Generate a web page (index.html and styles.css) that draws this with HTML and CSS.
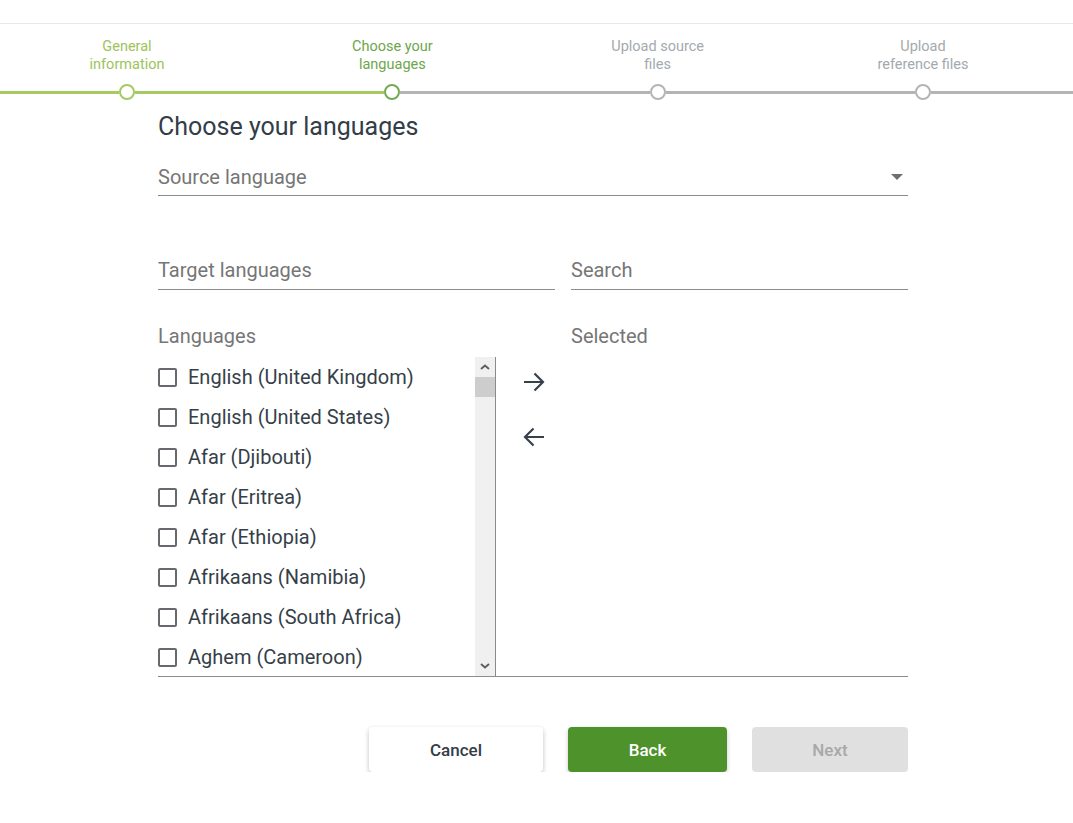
FILE: index.html
```html
<!DOCTYPE html>
<html>
<head>
<meta charset="utf-8">
<link rel="stylesheet" href="styles.css">
</head>
<body>
<div class="topbar"></div>
<div class="stepper-wrap">
  <div class="stepper">
    <div class="step done">
      <div class="step-label">General<br>information</div>
      <div class="node-row"><span class="ln ln-l"></span><span class="node"></span><span class="ln ln-r"></span></div>
    </div>
    <div class="step current">
      <div class="step-label">Choose your<br>languages</div>
      <div class="node-row"><span class="ln ln-l"></span><span class="node"></span><span class="ln ln-r"></span></div>
    </div>
    <div class="step todo">
      <div class="step-label">Upload source<br>files</div>
      <div class="node-row"><span class="ln ln-l"></span><span class="node"></span><span class="ln ln-r"></span></div>
    </div>
    <div class="step todo last">
      <div class="step-label">Upload<br>reference files</div>
      <div class="node-row"><span class="ln ln-l"></span><span class="node"></span><span class="ln ln-r"></span></div>
    </div>
  </div>
</div>

<main class="content">
  <h1 class="title">Choose your languages</h1>

  <div class="field select-field">
    <span class="placeholder">Source language</span>
    <span class="caret"></span>
  </div>

  <div class="two-col">
    <div class="field target-field"><span class="placeholder">Target languages</span></div>
    <div class="field search-field"><span class="placeholder">Search</span></div>
  </div>

  <div class="col-heads">
    <div class="col-head lang-head">Languages</div>
    <div class="col-head sel-head">Selected</div>
  </div>

  <div class="lists">
    <div class="lang-panel">
      <ul class="lang-list">
        <li class="item"><span class="cb"></span>English (United Kingdom)</li>
        <li class="item"><span class="cb"></span>English (United States)</li>
        <li class="item"><span class="cb"></span>Afar (Djibouti)</li>
        <li class="item"><span class="cb"></span>Afar (Eritrea)</li>
        <li class="item"><span class="cb"></span>Afar (Ethiopia)</li>
        <li class="item"><span class="cb"></span>Afrikaans (Namibia)</li>
        <li class="item"><span class="cb"></span>Afrikaans (South Africa)</li>
        <li class="item"><span class="cb"></span>Aghem (Cameroon)</li>
      </ul>
      <div class="scrollbar">
        <div class="sb-btn sb-up"><svg width="10" height="6" viewBox="0 0 10 6"><path d="M1 5 L5 1.5 L9 5" fill="none" stroke="#606060" stroke-width="2"/></svg></div>
        <div class="sb-track"><div class="sb-thumb"></div></div>
        <div class="sb-btn sb-down"><svg width="10" height="6" viewBox="0 0 10 6"><path d="M1 1 L5 4.5 L9 1" fill="none" stroke="#606060" stroke-width="2"/></svg></div>
      </div>
    </div>
    <div class="move-col">
      <button class="move-btn"><svg width="24" height="22" viewBox="0 0 24 22"><path d="M2 11 H21 M12.5 2.5 L21 11 L12.5 19.5" fill="none" stroke="#37414c" stroke-width="2.2"/></svg></button>
      <button class="move-btn"><svg width="24" height="22" viewBox="0 0 24 22"><path d="M22 11 H3 M11.5 2.5 L3 11 L11.5 19.5" fill="none" stroke="#37414c" stroke-width="2.2"/></svg></button>
    </div>
    <div class="selected-panel"></div>
  </div>

  <div class="actions">
    <button class="btn btn-cancel">Cancel</button>
    <button class="btn btn-back">Back</button>
    <button class="btn btn-next">Next</button>
  </div>
</main>
</body>
</html>
```

FILE: styles.css
```css
html, body {
  margin: 0;
  padding: 0;
  background: #ffffff;
  overflow-x: hidden;
}
body {
  font-family: Roboto, "Noto Sans", Arial, sans-serif;
  color: #333d47;
}

.topbar {
  height: 23px;
  border-bottom: 1px solid #e8e8e8;
}

.stepper-wrap {
  padding-top: 14px;
}
.stepper {
  display: grid;
  grid-template-columns: repeat(4, 265.33px);
  margin-left: -5.67px;
}
.step-label {
  text-align: center;
  font-size: 14.5px;
  line-height: 18px;
  height: 37px;
}
.done .step-label { color: #9cc45a; }
.current .step-label { color: #6da64c; }
.todo .step-label { color: #a4a9ae; }

.node-row {
  display: flex;
  align-items: center;
  margin-top: 9px;
  height: 16px;
}
.ln {
  flex: 1;
  height: 3px;
  background: #b4b4b4;
}
.node {
  width: 12px;
  height: 12px;
  border-radius: 50%;
  border: 2px solid #b4b4b4;
  background: #fff;
  flex: none;
}
.done .ln { background: #a6c964; }
.done .node { border-color: #a6c964; }
.current .ln-l { background: #a6c964; }
.current .node { border-color: #74a956; }
.last .ln-r { box-shadow: 40px 0 0 0 #b4b4b4; }

.content {
  margin-left: 158px;
  width: 750px;
}
.title {
  margin: 13px 0 0 0;
  font-size: 25px;
  line-height: 28px;
  font-weight: 400;
  color: #333d47;
}

.field {
  border-bottom: 1px solid #8c8c8c;
  font-size: 20px;
  line-height: 24px;
  color: #767676;
}
.select-field {
  margin-top: 24px;
  padding-bottom: 6px;
  display: flex;
  justify-content: space-between;
  align-items: center;
}
.caret {
  width: 0;
  height: 0;
  border-left: 6px solid transparent;
  border-right: 6px solid transparent;
  border-top: 6px solid #6f6f6f;
  margin-right: 5px;
}

.two-col {
  display: grid;
  grid-template-columns: 397px 337px;
  column-gap: 16px;
  margin-top: 62px;
}
.target-field, .search-field {
  padding-bottom: 7px;
}

.col-heads {
  display: grid;
  grid-template-columns: 413px 337px;
  margin-top: 34px;
  font-size: 20px;
  line-height: 24px;
  color: #767676;
}

.lists {
  display: flex;
  margin-top: 9px;
  height: 319px;
  border-bottom: 1px solid #8c8c8c;
}
.lang-panel {
  display: flex;
  width: 338px;
  flex: none;
}
.lang-list {
  list-style: none;
  margin: 0;
  padding: 0;
  width: 317px;
  overflow: hidden;
}
.item {
  display: flex;
  align-items: center;
  height: 40px;
  font-size: 20px;
  color: #363f49;
  white-space: nowrap;
}
.cb {
  width: 15px;
  height: 15px;
  border: 2px solid #666a6e;
  border-radius: 2px;
  margin-right: 11px;
  flex: none;
}
.scrollbar {
  width: 20px;
  display: flex;
  flex-direction: column;
  background: #f0f0f0;
  border-right: 1px solid #8a8a8a;
}
.sb-btn {
  height: 20px;
  display: flex;
  align-items: center;
  justify-content: center;
  flex: none;
}
.sb-track {
  flex: 1;
}
.sb-thumb {
  height: 20px;
  background: #cdcdcd;
}

.move-col {
  width: 75px;
  flex: none;
  display: flex;
  flex-direction: column;
  align-items: center;
  padding-top: 14px;
  gap: 33px;
}
.move-btn {
  border: 0;
  background: transparent;
  padding: 0;
  width: 24px;
  height: 22px;
  display: block;
}
.selected-panel {
  flex: 1;
}

.actions {
  display: flex;
  justify-content: flex-end;
  gap: 25px;
  margin-top: 50px;
}
.btn {
  height: 45px;
  border: 0;
  border-radius: 4px;
  font-family: Roboto, "Noto Sans", Arial, sans-serif;
  font-size: 17px;
  font-weight: 500;
  padding: 0;
}
.btn-cancel {
  width: 174px;
  background: #ffffff;
  color: #333d47;
  box-shadow: 0 2px 5px rgba(0,0,0,0.25);
}
.btn-back {
  width: 159px;
  background: #4e922c;
  color: #ffffff;
  box-shadow: 0 2px 4px rgba(0,0,0,0.22);
}
.btn-next {
  width: 156px;
  background: #e0e0e0;
  color: #a8a8a8;
}
```
